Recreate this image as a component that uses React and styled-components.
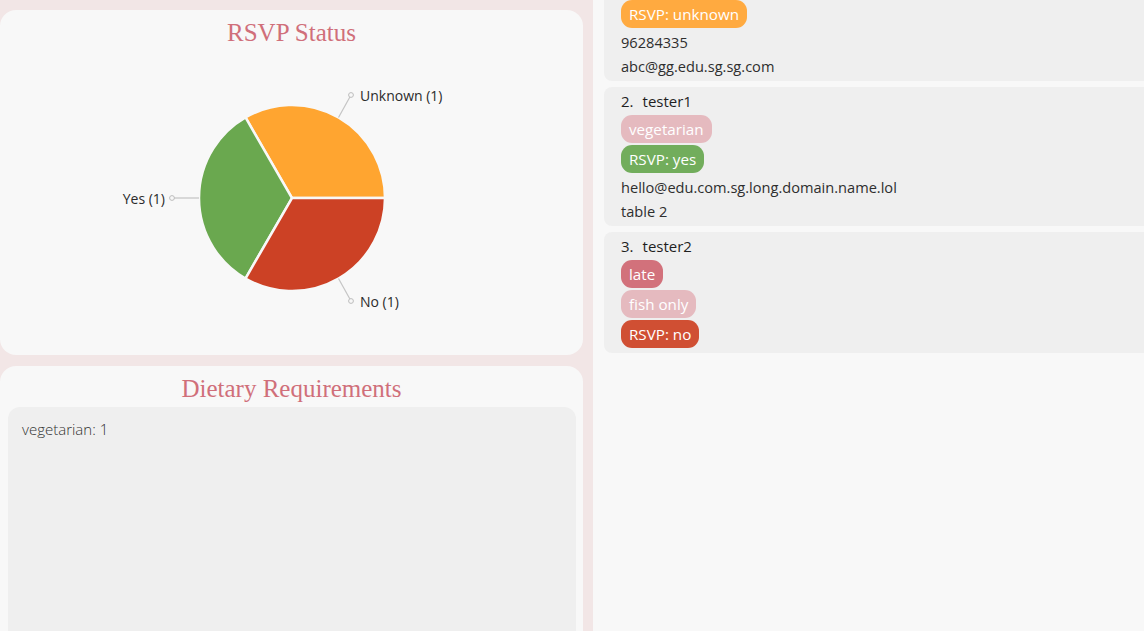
import styled, { createGlobalStyle } from "styled-components";

const GlobalStyle = createGlobalStyle`
  html, body {
    margin: 0;
    padding: 0;
    height: 100%;
    overflow: hidden;
  }
  #root {
    height: 100%;
  }
`;

const guests = [
  {
    id: 1,
    clipped: true,
    tags: [],
    rsvp: "unknown",
    lines: ["96284335", "abc@gg.edu.sg.sg.com"],
  },
  {
    id: 2,
    name: "tester1",
    tags: [{ label: "vegetarian", kind: "diet" }],
    rsvp: "yes",
    lines: ["hello@edu.com.sg.long.domain.name.lol", "table 2"],
  },
  {
    id: 3,
    name: "tester2",
    tags: [
      { label: "late", kind: "note" },
      { label: "fish only", kind: "diet" },
    ],
    rsvp: "no",
    lines: [],
  },
];

const tagColours = {
  diet: "#e5babf",
  note: "#d2717b",
  unknown: "#ffaa40",
  yes: "#72ad5c",
  no: "#d04f33",
};

const slices = [
  { label: "Unknown (1)", colour: "#ffa530", from: 0, to: 120 },
  { label: "Yes (1)", colour: "#6aa84f", from: 120, to: 240 },
  { label: "No (1)", colour: "#cc4125", from: 240, to: 360 },
];

const CX = 292;
const CY = 151;
const R = 93;

const point = (deg, r) => {
  const a = (deg * Math.PI) / 180;
  return [CX + r * Math.cos(a), CY - r * Math.sin(a)];
};

const slicePath = (from, to) => {
  const [x1, y1] = point(from, R);
  const [x2, y2] = point(to, R);
  return `M${CX},${CY} L${x1},${y1} A${R},${R} 0 0 0 ${x2},${y2} Z`;
};

const PieChart = () => {
  return (
    <ChartSvg viewBox="0 0 583 308">
      {slices.map((s) => (
        <path
          key={s.label}
          d={slicePath(s.from, s.to)}
          fill={s.colour}
          stroke="#f8f8f8"
          strokeWidth="2.5"
          strokeLinejoin="round"
        />
      ))}
      {/* label leaders */}
      <polyline points={`${point(60, R).join(",")} 351,48`} fill="none" stroke="#c4c4c4" strokeWidth="1.2" />
      <circle cx="351" cy="48" r="2.4" fill="#f8f8f8" stroke="#bdbdbd" strokeWidth="1" />
      <ChartLabel x="360" y="54">Unknown (1)</ChartLabel>

      <polyline points={`${CX - R},${CY} 173,${CY}`} fill="none" stroke="#c4c4c4" strokeWidth="1.2" />
      <circle cx="172" cy={CY} r="2.4" fill="#f8f8f8" stroke="#bdbdbd" strokeWidth="1" />
      <ChartLabel x="165" y={CY + 6} textAnchor="end">
        Yes (1)
      </ChartLabel>

      <polyline points={`${point(300, R).join(",")} 351,254`} fill="none" stroke="#c4c4c4" strokeWidth="1.2" />
      <circle cx="351" cy="254" r="2.4" fill="#f8f8f8" stroke="#bdbdbd" strokeWidth="1" />
      <ChartLabel x="360" y="260">No (1)</ChartLabel>
    </ChartSvg>
  );
};

const GuestCell = ({ guest }) => {
  return (
    <Cell $clipped={guest.clipped}>
      {!guest.clipped && (
        <NameRow>
          <span>{guest.id}.</span>
          <span>{guest.name}</span>
        </NameRow>
      )}
      {guest.tags.map((t) => (
        <TagRow key={t.label}>
          <Tag $bg={tagColours[t.kind]}>{t.label}</Tag>
        </TagRow>
      ))}
      <TagRow>
        <Tag $bg={tagColours[guest.rsvp]}>RSVP: {guest.rsvp}</Tag>
      </TagRow>
      {guest.lines.map((l) => (
        <InfoLine key={l}>{l}</InfoLine>
      ))}
    </Cell>
  );
};

const App = () => {
  return (
    <>
      <GlobalStyle />
      <Layout>
        <LeftColumn>
          <Card $height="345px">
            <CardTitle>RSVP Status</CardTitle>
            <PieChart />
          </Card>
          <Card $height="320px">
            <CardTitle>Dietary Requirements</CardTitle>
            <DietBox>
              <DietLine>vegetarian: 1</DietLine>
            </DietBox>
          </Card>
        </LeftColumn>
        <GuestPanel>
          <GuestList>
            {guests.map((g) => (
              <GuestCell key={g.id} guest={g} />
            ))}
          </GuestList>
        </GuestPanel>
      </Layout>
    </>
  );
};

const Layout = styled.div`
  display: flex;
  height: 100vh;
  overflow: hidden;
  font-family: "Open Sans", "Noto Sans", sans-serif;
`;

const LeftColumn = styled.div`
  width: 593px;
  flex-shrink: 0;
  box-sizing: border-box;
  padding: 10px 10px 0 0;
  background-color: #f2e6e6;
  display: flex;
  flex-direction: column;
  gap: 11px;
  overflow: hidden;
`;

const Card = styled.div`
  flex-shrink: 0;
  height: ${(p) => p.$height};
  background-color: #f8f8f8;
  border-radius: 16px;
  display: flex;
  flex-direction: column;
`;

const CardTitle = styled.h2`
  margin: 9px 0 4px;
  font-family: "Liberation Serif", "Times New Roman", serif;
  font-weight: normal;
  font-size: 25px;
  line-height: 28px;
  text-align: center;
  color: #d06f7a;
`;

const ChartSvg = styled.svg`
  display: block;
  width: 583px;
  height: 308px;
  margin-top: -4px;
`;

const ChartLabel = styled.text`
  font-family: "Open Sans", "Noto Sans", sans-serif;
  font-size: 14px;
  fill: #2b2b2b;
`;

const DietBox = styled.div`
  flex: 1;
  margin: 0 7px 0 8px;
  padding: 12px 14px;
  background-color: #efefef;
  border-radius: 12px;
`;

const DietLine = styled.div`
  font-size: 15px;
  line-height: 20px;
  font-weight: 300;
  color: #333;
`;

const GuestPanel = styled.div`
  flex: 1;
  background-color: #f8f8f8;
  padding-left: 11px;
  overflow: hidden;
`;

/* list is scrolled a little: the first cell's top is out of view */
const GuestList = styled.div`
  display: flex;
  flex-direction: column;
  gap: 6px;
  margin: -2px -30px 0 0;
`;

const Cell = styled.div`
  background-color: #efefef;
  border-radius: ${(p) => (p.$clipped ? "0 0 8px 8px" : "8px")};
  padding: ${(p) => (p.$clipped ? "0" : "2px")} 17px 3px;
`;

const NameRow = styled.div`
  display: flex;
  gap: 9px;
  font-size: 15px;
  line-height: 24px;
  color: #1f1f1f;
`;

const TagRow = styled.div`
  display: flex;
  margin: 2px 0 2px;
`;

const Tag = styled.span`
  display: inline-block;
  height: 28px;
  line-height: 28px;
  padding: 0 8px;
  border-radius: 11px;
  background-color: ${(p) => p.$bg};
  color: #fff;
  font-size: 15.2px;
`;

const InfoLine = styled.div`
  font-size: 14.6px;
  line-height: 24px;
  color: #2e2e2e;
`;

export default App;
